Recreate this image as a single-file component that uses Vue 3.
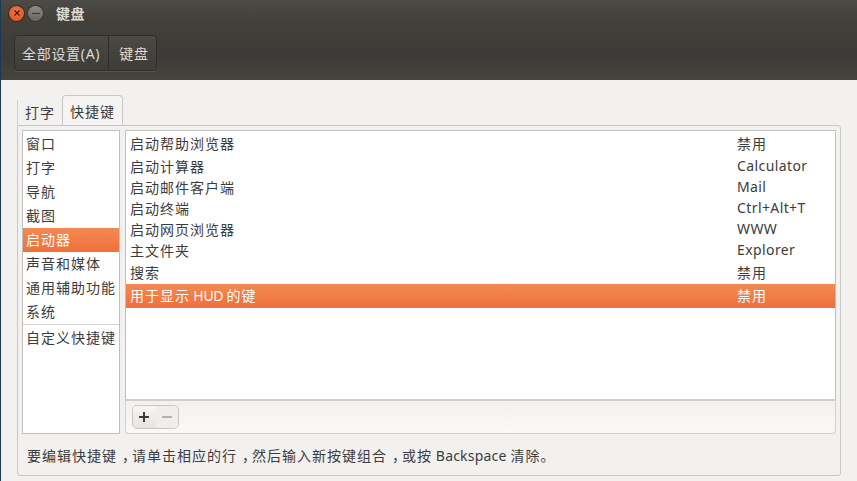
<script setup>
const leftTop = ['窗口', '打字', '导航', '截图', '启动器', '声音和媒体', '通用辅助功能', '系统']
const rows = [
  { name: '启动帮助浏览器', key: '禁用', cn: true, h: 25 },
  { name: '启动计算器', key: 'Calculator', h: 21 },
  { name: '启动邮件客户端', key: 'Mail', h: 21 },
  { name: '启动终端', key: 'Ctrl+Alt+T', h: 21 },
  { name: '启动网页浏览器', key: 'WWW', h: 21 },
  { name: '主文件夹', key: 'Explorer', h: 21 },
  { name: '搜索', key: '禁用', cn: true, h: 23 },
  { name: '用于显示 HUD 的键', key: '禁用', cn: true, h: 24, sel: true }
]
const segs = (text) =>
  text
    .split(/([A-Za-z ]+|，)/)
    .filter(Boolean)
    .map((t) => ({ t, cls: t === '，' ? 'comma' : /^[A-Za-z ]+$/.test(t) ? 'latin' : 'cjk' }))
const hint = segs('要编辑快捷键，请单击相应的行，然后输入新按键组合，或按 Backspace 清除。')
</script>

<template>
  <div class="window">
    <header class="titlebar">
      <span class="wbtn close">
        <svg width="8" height="8" viewBox="0 0 8 8"><path d="M1.5 1.5l5 5M6.5 1.5l-5 5" stroke="#4a1a08" stroke-width="1.3" /></svg>
      </span>
      <span class="wbtn min"><span class="dash"></span></span>
      <span class="title">键盘</span>
    </header>
    <div class="toolbar">
      <div class="crumbs">
        <span class="crumb">全部设置(A)</span>
        <span class="crumb">键盘</span>
      </div>
    </div>
    <main class="content">
      <div class="tabs">
        <span class="tab">打字</span>
        <span class="tab active">快捷键</span>
      </div>
      <section class="notebook">
        <div class="panes">
          <ul class="left">
            <li v-for="item in leftTop" :key="item" :class="{ sel: item === '启动器' }">{{ item }}</li>
            <li class="custom">自定义快捷键</li>
          </ul>
          <div class="right">
            <div class="list">
              <div
                v-for="r in rows"
                :key="r.name"
                class="row"
                :class="{ sel: r.sel }"
                :style="{ height: r.h + 'px' }"
              >
                <span class="name"><span v-for="(s, i) in segs(r.name)" :key="i" :class="s.cls">{{ s.t }}</span></span>
                <span class="key" :class="{ cn: r.cn }">{{ r.key }}</span>
              </div>
            </div>
            <div class="listbar">
              <div class="btns">
                <span class="btn plus">
                  <svg width="12" height="12" viewBox="0 0 12 12"><path d="M6 1v10M1 6h10" stroke="#3c3c3c" stroke-width="2" /></svg>
                </span>
                <span class="btn minus">
                  <svg width="12" height="12" viewBox="0 0 12 12"><path d="M1 6h10" stroke="#b4b2ae" stroke-width="2" /></svg>
                </span>
              </div>
            </div>
          </div>
        </div>
        <p class="hint"><span v-for="(s, i) in hint" :key="i" :class="s.cls">{{ s.t }}</span></p>
      </section>
    </main>
  </div>
</template>

<style>
html, body { margin: 0; background: #f2f1f0; overflow: hidden; }
</style>

<style scoped>
.window {
  width: 857px;
  height: 481px;
  display: flex;
  flex-direction: column;
  overflow: hidden;
  font-family: "Noto Sans", "Noto Sans CJK SC", sans-serif;
  font-size: 14px;
  color: #3c3c3c;
  border-left: 1px solid #1d3a55;
  box-sizing: border-box;
}
.cjk { letter-spacing: 1px; }
.latin { letter-spacing: .2px; }
.comma { font-feature-settings: "halt"; padding: 0 3px 0 5px; }
.row .latin { letter-spacing: -.3px; word-spacing: 0; }
.titlebar {
  height: 27px;
  flex: none;
  display: flex;
  align-items: center;
  padding: 0 0 1px 8px;
  background: linear-gradient(#4b4a44, #3f3e39);
  box-sizing: border-box;
}
.wbtn {
  width: 15px;
  height: 15px;
  border-radius: 50%;
  display: flex;
  align-items: center;
  justify-content: center;
  flex: none;
}
.close {
  background: radial-gradient(circle at 50% 40%, #f47a4c, #d9481c);
  box-shadow: 0 0 0 1px #3a2a22;
}
.min {
  margin-left: 4px;
  background: linear-gradient(#8d8c87, #65645f);
  box-shadow: 0 0 0 1px #35342f;
}
.dash { width: 8px; height: 1px; background: #38372f; }
.title {
  margin-left: 13px;
  font-size: 14px;
  font-weight: 700;
  letter-spacing: .6px;
  color: #dfdbd2;
}
.toolbar {
  height: 53px;
  flex: none;
  box-sizing: border-box;
  padding: 8px 0 0 13px;
  background: linear-gradient(#403f3a, #3c3b37 55%, #45433e);
}
.crumbs {
  display: inline-flex;
  height: 36px;
  border: 1px solid #2e2d29;
  border-radius: 4px;
  background: linear-gradient(#4a4944, #3d3c37);
  box-shadow: 0 1px 0 #55534d;
  box-sizing: border-box;
}
.crumb {
  display: flex;
  align-items: center;
  padding: 0 8px 0 7px;
  color: #dfdbd2;
  letter-spacing: .7px;
}
.crumb + .crumb { border-left: 1px solid #2e2d29; padding: 0 7px 0 10px; }
.content {
  flex: 1;
  min-height: 0;
  box-sizing: border-box;
  padding: 16px 16px 5px 16px;
  background: #f2f1f0;
  display: flex;
  flex-direction: column;
}
.tabs {
  display: flex;
  height: 29px;
  flex: none;
  align-items: flex-end;
  position: relative;
  z-index: 1;
}
.tab {
  width: 45px;
  height: 25px;
  display: flex;
  align-items: center;
  justify-content: center;
  padding-bottom: 2px;
  letter-spacing: 1px;
  box-sizing: border-box;
  border-left: 1px solid #d3d1cd;
}
.tab.active {
  width: 61px;
  height: 30px;
  padding-bottom: 0;
  border: 1px solid #c9c7c3;
  border-bottom: 0;
  border-radius: 4px 4px 0 0;
  background: #f5f4f3;
}
.notebook {
  flex: 1;
  min-height: 0;
  box-sizing: border-box;
  border: 1px solid #c9c7c3;
  border-radius: 0 3px 3px 3px;
  padding: 4px;
  display: flex;
  flex-direction: column;
  background: #f2f1f0;
}
.panes {
  height: 304px;
  flex: none;
  display: flex;
  gap: 5px;
}
.left {
  width: 98px;
  flex: none;
  margin: 0;
  padding: 1px 0 0;
  list-style: none;
  box-sizing: border-box;
  border: 1px solid #c2c0bc;
  background: #fff;
}
.left li {
  height: 24px;
  display: flex;
  align-items: center;
  padding: 0 0 2px 3px;
  box-sizing: border-box;
  letter-spacing: 1px;
  white-space: nowrap;
}
.left li.sel { background: linear-gradient(#f38a52, #ee6f3c); color: #fff; }
.left li.custom { height: 27px; border-top: 1px solid #d3d1cd; }
.right {
  flex: 1;
  min-width: 0;
  display: flex;
  flex-direction: column;
}
.list {
  height: 271px;
  flex: none;
  box-sizing: border-box;
  border: 1px solid #c2c0bc;
  border-bottom: 2px solid #d0cecb;
  background: #fff;
}
.row {
  display: flex;
  align-items: center;
  padding: 0 0 2px 4px;
  box-sizing: border-box;
  white-space: pre;
}
.row.sel { background: linear-gradient(#f38a52, #ee6f3c); color: #fff; }
.name { width: 607px; flex: none; }
.key { letter-spacing: .4px; }
.key.cn { letter-spacing: 1px; }
.listbar {
  flex: 1;
  box-sizing: border-box;
  padding: 4px 0 0 6px;
  background: linear-gradient(#f2f1f0, #faf9f8);
  border: 1px solid #d3d1cd;
  border-top: 0;
  border-radius: 0 0 4px 4px;
}
.btns {
  display: inline-flex;
  height: 24px;
  width: 47px;
  border: 1px solid #c9c7c3;
  border-radius: 5px;
  box-sizing: border-box;
  overflow: hidden;
}
.btn {
  flex: 1;
  display: flex;
  align-items: center;
  justify-content: center;
}
.plus { background: linear-gradient(#f7f6f5, #e6e4e1); }
.minus { background: #efeeec; }
.hint {
  margin: 0;
  flex: 1;
  display: flex;
  align-items: center;
  padding: 5px 0 0 5px;
  box-sizing: border-box;
  white-space: pre;
}
</style>
